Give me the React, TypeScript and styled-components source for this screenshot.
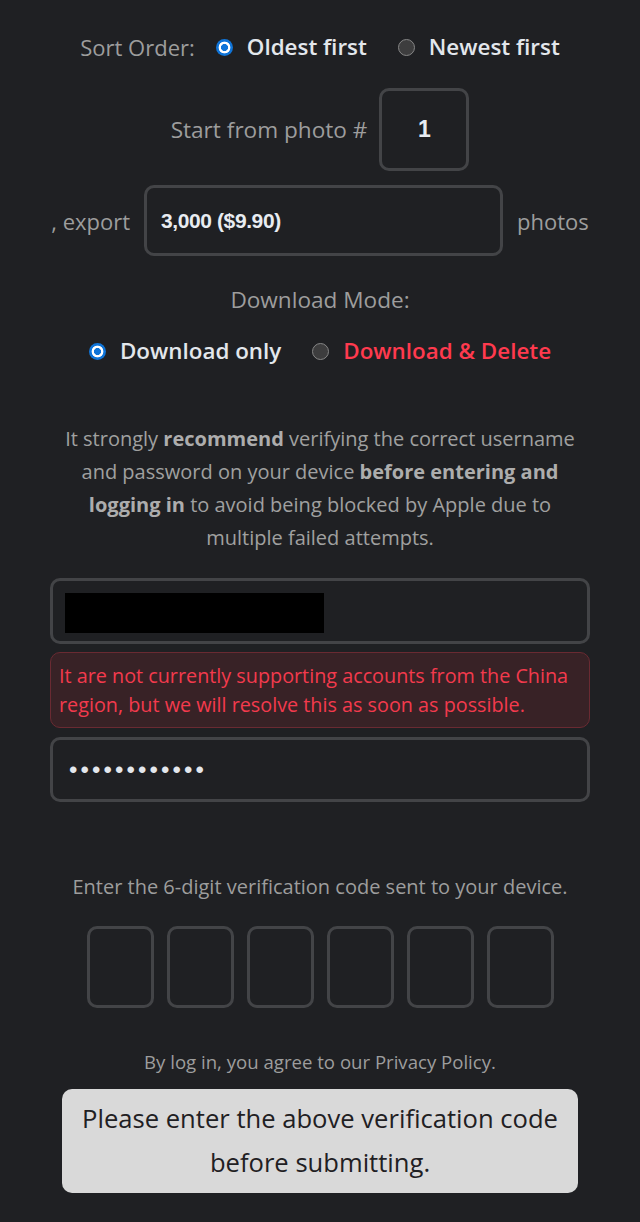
import React from "react";
import styled, { createGlobalStyle } from "styled-components";

const GlobalStyle = createGlobalStyle`
  html, body {
    margin: 0;
    padding: 0;
    background: #1f2023;
  }
  body {
    font-family: "Open Sans", "Noto Sans", sans-serif;
  }
  * { box-sizing: border-box; }
`;

const Page = styled.main`
  width: 540px;
  margin: 0 auto;
  padding: 32px 0 29px;
  display: flex;
  flex-direction: column;
  align-items: stretch;
`;

const Row = styled.div<{ $top?: number; $gap?: number }>`
  display: flex;
  align-items: center;
  justify-content: center;
  min-height: 30px;
  margin-top: ${(p) => p.$top ?? 0}px;
  gap: ${(p) => p.$gap ?? 0}px;
  white-space: nowrap;
`;

const Label = styled.span<{ $size?: number }>`
  font-size: ${(p) => p.$size ?? 22}px;
  line-height: 30px;
  color: #9d9d9d;
`;

const Option = styled.label<{ $offset?: number }>`
  display: flex;
  align-items: center;
  gap: 14px;
  margin-left: ${(p) => p.$offset ?? 0}px;
  cursor: pointer;
`;

const OptionText = styled.span<{ $danger?: boolean }>`
  font-size: 22.4px;
  line-height: 30px;
  font-weight: 600;
  color: ${(p) => (p.$danger ? "#ff3a4e" : "#e3e7ec")};
`;

const Radio = styled.input.attrs({ type: "radio" })`
  appearance: none;
  margin: 0;
  width: 17px;
  height: 17px;
  border-radius: 50%;
  background: #3d3d3e;
  border: 1.5px solid #868686;
  flex: none;
  &:checked {
    border: none;
    background: radial-gradient(
      circle closest-side,
      #0f74d8 0 3.2px,
      #ffffff 3.8px 5.6px,
      #0f74d8 6.2px
    );
  }
`;

const BoxInput = styled.input<{ $w: number; $h: number; $center?: boolean }>`
  width: ${(p) => p.$w}px;
  height: ${(p) => p.$h}px;
  border: 3px solid #434447;
  border-radius: 10px;
  background: transparent;
  color: #e8ecf1;
  font-family: "Liberation Sans", Arial, sans-serif;
  font-weight: 700;
  font-size: ${(p) => (p.$center ? 23 : 21)}px;
  letter-spacing: ${(p) => (p.$center ? 0 : -0.4)}px;
  padding: 0 14px;
  text-align: ${(p) => (p.$center ? "center" : "left")};
  outline: none;
`;

const Notice = styled.p`
  margin: 56px 0 0;
  text-align: center;
  font-size: 20px;
  line-height: 33px;
  color: #a0a0a0;
  strong {
    font-weight: 700;
    color: #adadad;
  }
`;

const FieldShell = styled.div<{ $top: number }>`
  position: relative;
  margin-top: ${(p) => p.$top}px;
`;

const TextField = styled.input<{ $h: number }>`
  display: block;
  width: 100%;
  height: ${(p) => p.$h}px;
  border: 3px solid #434447;
  border-radius: 10px;
  background: transparent;
  color: #e3e7ec;
  font-family: "Liberation Sans", Arial, sans-serif;
  font-size: 24px;
  letter-spacing: 3.1px;
  padding: 0 16px;
  outline: none;
`;

const Redaction = styled.span`
  position: absolute;
  left: 15px;
  top: 15px;
  width: 259px;
  height: 40px;
  background: #000;
`;

const ErrorBox = styled.div`
  margin-top: 8px;
  padding: 8px 8px;
  border: 1px solid #6a2a32;
  border-radius: 10px;
  background: #382226;
  color: #f33a4d;
  font-size: 19.8px;
  line-height: 29px;
`;

const Hint = styled.p<{ $top: number; $size: number; $lh: number }>`
  margin: ${(p) => p.$top}px 0 0;
  text-align: center;
  font-size: ${(p) => p.$size}px;
  line-height: ${(p) => p.$lh}px;
  color: #9d9d9d;
`;

const CodeRow = styled.div`
  margin-top: 26px;
  display: flex;
  justify-content: center;
  gap: 13px;
`;

const CodeBox = styled.input`
  width: 67px;
  height: 82px;
  border: 3px solid #434447;
  border-radius: 10px;
  background: transparent;
  color: #e3e7ec;
  text-align: center;
  font-size: 28px;
  outline: none;
`;

const SubmitButton = styled.button`
  margin: 15px 12px 0;
  height: 104px;
  border: none;
  border-radius: 10px;
  background: #d9d9d9;
  color: #1f2023;
  font-family: "Open Sans", "Noto Sans", sans-serif;
  font-size: 25.6px;
  line-height: 44px;
  padding: 8px 16px;
  text-align: center;
`;

export default function App() {
  return (
    <>
      <GlobalStyle />
      <Page>
        <Row>
          <Label>Sort Order:</Label>
          <Option $offset={21}>
            <Radio name="sort" defaultChecked />
            <OptionText>Oldest first</OptionText>
          </Option>
          <Option $offset={31}>
            <Radio name="sort" />
            <OptionText>Newest first</OptionText>
          </Option>
        </Row>

        <Row $top={26} $gap={12}>
          <Label $size={22.6}>Start from photo #</Label>
          <BoxInput $w={90} $h={83} $center defaultValue="1" />
        </Row>

        <Row $top={14} $gap={14}>
          <Label>, export</Label>
          <BoxInput $w={359} $h={71} defaultValue="3,000 ($9.90)" readOnly />
          <Label>photos</Label>
        </Row>

        <Row $top={29}>
          <Label $size={22.6}>Download Mode:</Label>
        </Row>

        <Row $top={21}>
          <Option>
            <Radio name="mode" defaultChecked />
            <OptionText>Download only</OptionText>
          </Option>
          <Option $offset={31}>
            <Radio name="mode" />
            <OptionText $danger>Download &amp; Delete</OptionText>
          </Option>
        </Row>

        <Notice>
          It strongly <strong>recommend</strong> verifying the correct username
          <br />
          and password on your device <strong>before entering and</strong>
          <br />
          <strong>logging in</strong> to avoid being blocked by Apple due to
          <br />
          multiple failed attempts.
        </Notice>

        <FieldShell $top={24}>
          <TextField $h={66} type="text" aria-label="Apple ID" />
          <Redaction />
        </FieldShell>

        <ErrorBox>
          It are not currently supporting accounts from the China region, but we
          will resolve this as soon as possible.
        </ErrorBox>

        <FieldShell $top={9}>
          <TextField $h={65} type="password" defaultValue="passwordpass" />
        </FieldShell>

        <Hint $top={72} $size={20} $lh={26}>
          Enter the 6-digit verification code sent to your device.
        </Hint>

        <CodeRow>
          {[0, 1, 2, 3, 4, 5].map((i) => (
            <CodeBox key={i} maxLength={1} inputMode="numeric" />
          ))}
        </CodeRow>

        <Hint $top={42} $size={18.6} $lh={24}>
          By log in, you agree to our Privacy Policy.
        </Hint>

        <SubmitButton>
          Please enter the above verification code
          <br />
          before submitting.
        </SubmitButton>
      </Page>
    </>
  );
}
